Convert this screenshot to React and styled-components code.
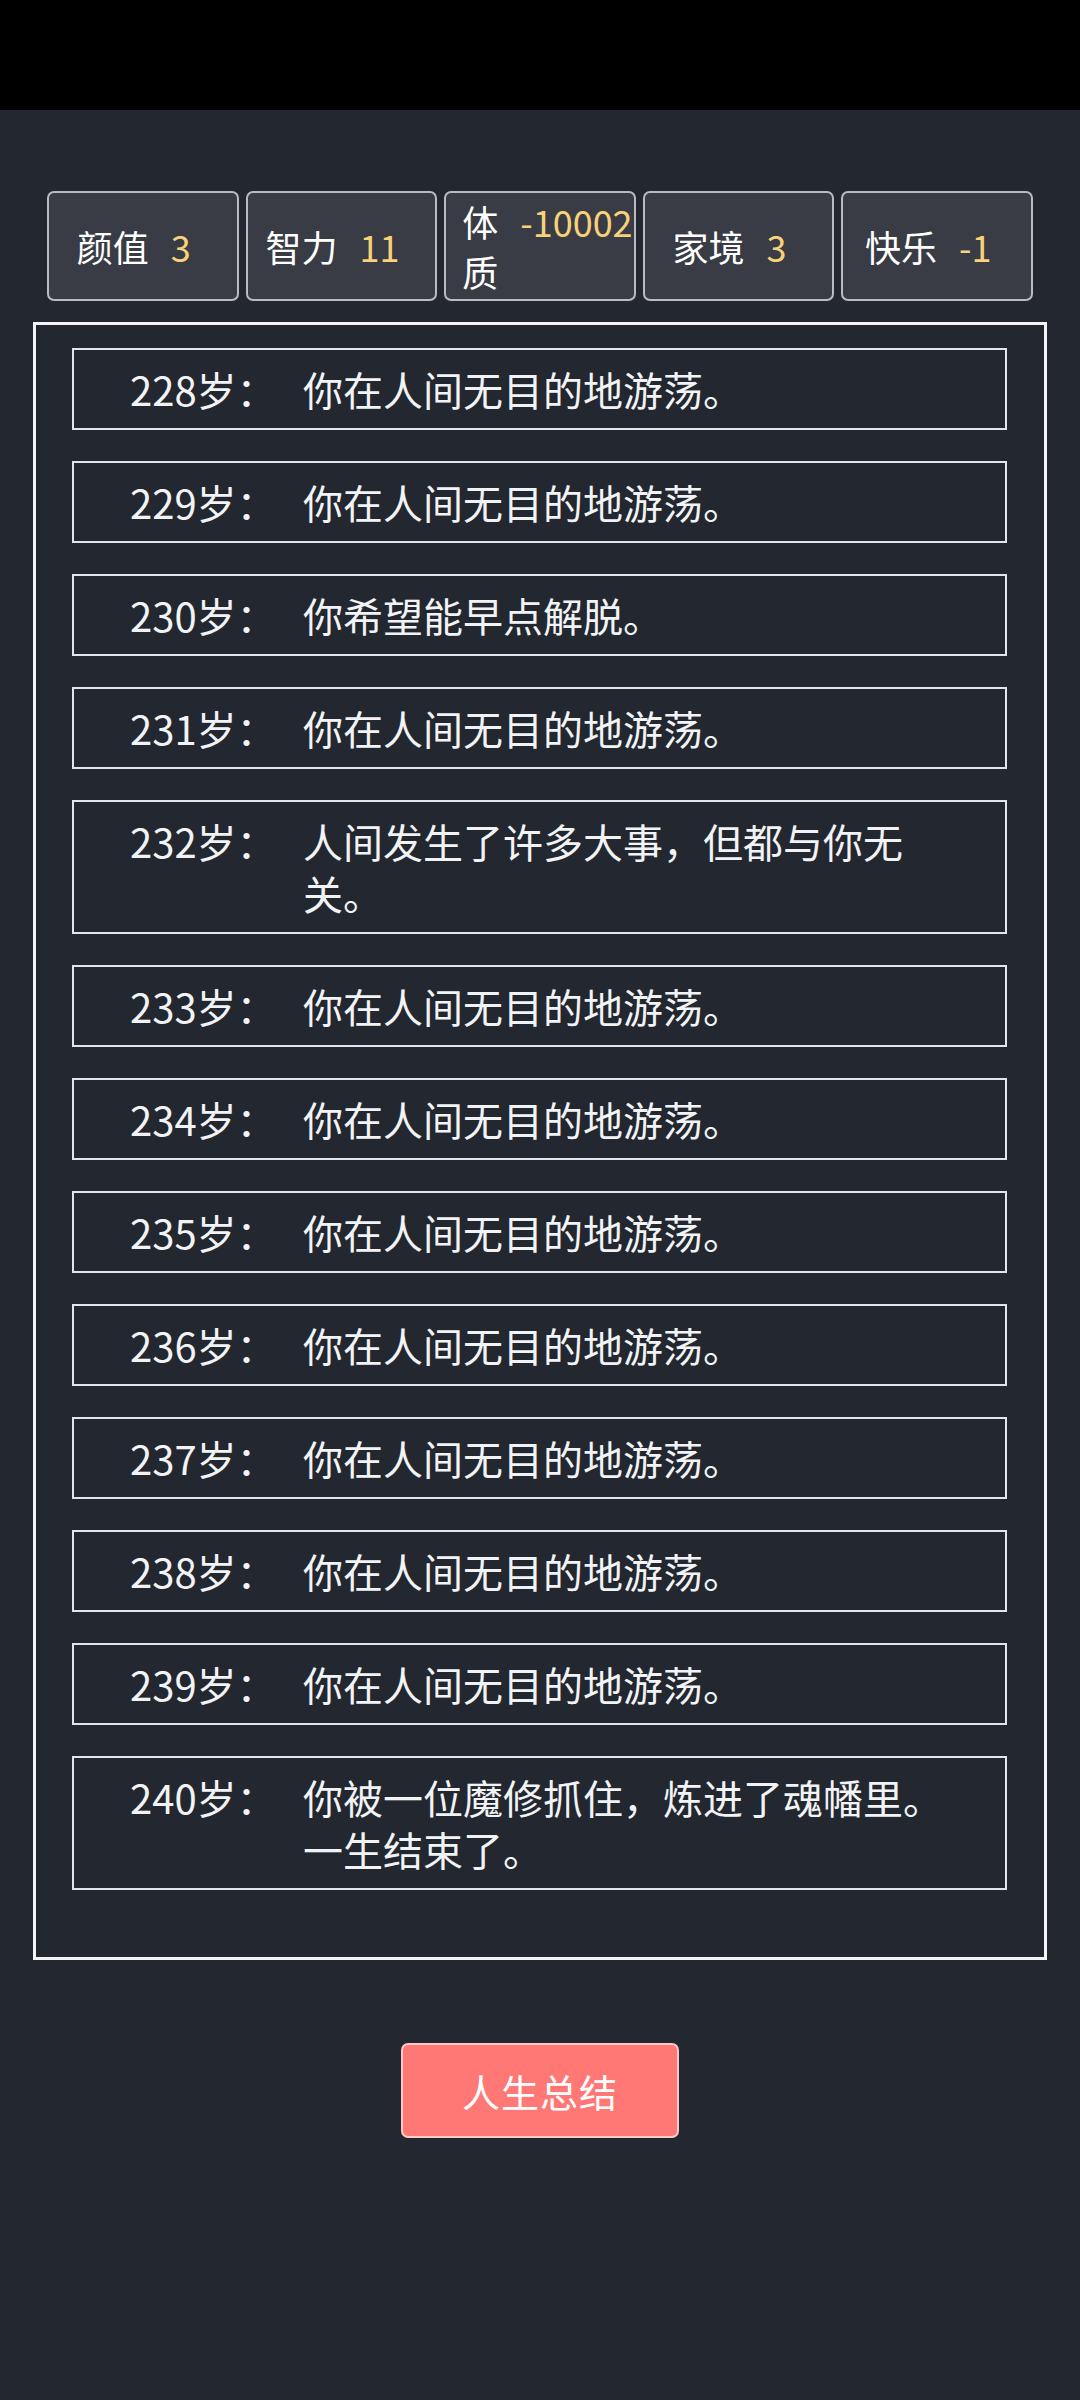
import styled, { createGlobalStyle } from "styled-components";

const GlobalStyle = createGlobalStyle`
  html, body {
    margin: 0;
    padding: 0;
    background-color: #222730;
  }
  body {
    font-family: "Noto Sans CJK SC", "Noto Sans", sans-serif;
    color: #ffffff;
  }
`;

const StatusBar = styled.div`
  height: 110px;
  background-color: #000000;
`;

const Page = styled.div`
  padding: 81px 33px 200px;
  box-sizing: border-box;
`;

const StatRow = styled.ul`
  display: flex;
  gap: 7px;
  list-style: none;
  margin: 0;
  padding: 0 14px;
`;

const StatBox = styled.li`
  flex: 1;
  min-width: 0;
  height: 110px;
  box-sizing: border-box;
  display: flex;
  align-items: center;
  justify-content: safe center;
  padding: 0 34px 0 16px;
  background-color: #393c45;
  border: 2px solid #b9bbc0;
  border-radius: 7px;
  overflow: hidden;
`;

const StatInner = styled.div`
  display: flex;
  align-items: baseline;
  gap: 22px;
`;

const StatLabel = styled.span`
  font-size: 36px;
  line-height: 50px;
  color: #ffffff;
`;

const StatValue = styled.span`
  font-size: 36px;
  line-height: 50px;
  color: #f7d27a;
  white-space: nowrap;
`;

const LogPanel = styled.div`
  margin-top: 21px;
  border: 3px solid #f4f4f6;
  padding: 23px 37px 36px 36px;
`;

const LogItem = styled.div`
  display: flex;
  align-items: flex-start;
  border: 2px solid #e4e5e8;
  padding: 13px 40px 13px 56px;
  margin-bottom: 31px;
  font-size: 40px;
  line-height: 52px;
  color: #f2f3f5;
`;

const Age = styled.span`
  flex-shrink: 0;
  width: 173px;
`;

const Event = styled.span`
  flex: 1;
  min-width: 0;
`;

const ButtonRow = styled.div`
  display: flex;
  justify-content: center;
  margin-top: 83px;
`;

const SummaryButton = styled.button`
  width: 278px;
  height: 95px;
  background-color: #ff7875;
  border: 2px solid #ffc9c7;
  border-radius: 7px;
  color: #ffffff;
  font-family: "Noto Sans CJK SC", "Noto Sans", sans-serif;
  font-size: 38px;
  letter-spacing: 1px;
  cursor: pointer;
`;

const stats = [
  { label: "颜值", value: 3 },
  { label: "智力", value: 11 },
  { label: "体质", value: -10002 },
  { label: "家境", value: 3 },
  { label: "快乐", value: -1 },
];

const wander = "你在人间无目的地游荡。";

const logs = [
  { age: 228, text: wander },
  { age: 229, text: wander },
  { age: 230, text: "你希望能早点解脱。" },
  { age: 231, text: wander },
  { age: 232, text: "人间发生了许多大事，但都与你无关。" },
  { age: 233, text: wander },
  { age: 234, text: wander },
  { age: 235, text: wander },
  { age: 236, text: wander },
  { age: 237, text: wander },
  { age: 238, text: wander },
  { age: 239, text: wander },
  { age: 240, text: "你被一位魔修抓住，炼进了魂幡里。一生结束了。" },
];

export default function App() {
  return (
    <>
      <GlobalStyle />
      <StatusBar />
      <Page>
        <StatRow>
          {stats.map((s) => (
            <StatBox key={s.label}>
              <StatInner>
                <StatLabel>{s.label}</StatLabel>
                <StatValue>{s.value}</StatValue>
              </StatInner>
            </StatBox>
          ))}
        </StatRow>
        <LogPanel>
          {logs.map((l) => (
            <LogItem key={l.age}>
              <Age>{l.age}岁：</Age>
              <Event>{l.text}</Event>
            </LogItem>
          ))}
        </LogPanel>
        <ButtonRow>
          <SummaryButton>人生总结</SummaryButton>
        </ButtonRow>
      </Page>
    </>
  );
}
